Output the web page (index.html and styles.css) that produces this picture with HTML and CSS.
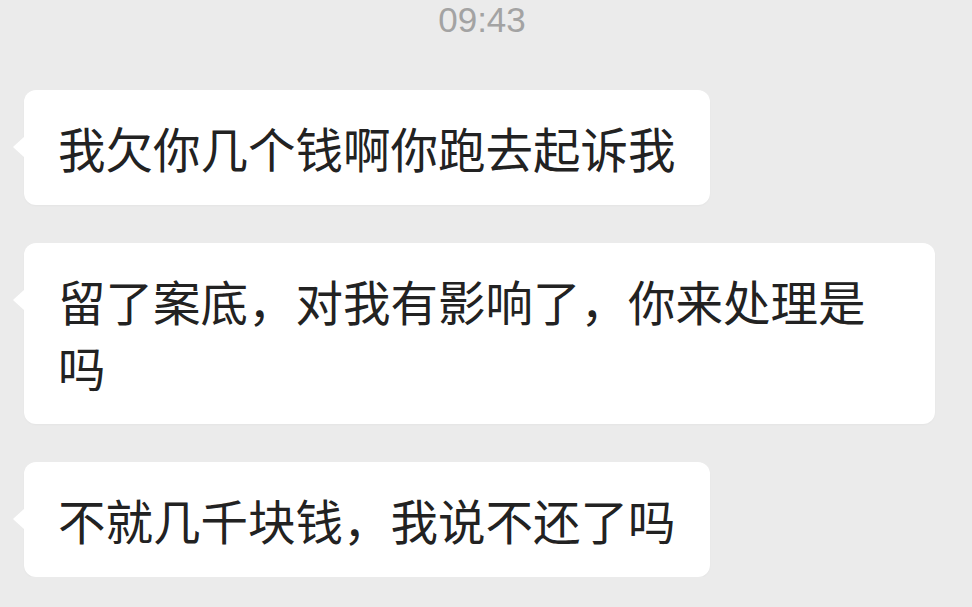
FILE: index.html
```html
<!DOCTYPE html>
<html lang="zh-CN">
<head>
    <meta charset="UTF-8">
    <meta name="viewport" content="width=device-width, initial-scale=1.0">
    <title>聊天</title>
    <link rel="stylesheet" href="styles.css">
</head>
<body>

    <div class="time">09:43</div>

    <div class="chat">
        <div class="bubble">我欠你几个钱啊你跑去起诉我</div>
        <div class="bubble">留了案底，对我有影响了，你来处理是吗</div>
        <div class="bubble">不就几千块钱，我说不还了吗</div>
    </div>

</body>
</html>
```

FILE: styles.css
```css
body {
    margin: 0;
    background-color: #ebebeb;
    font-family: "Noto Sans CJK SC", "Noto Sans", sans-serif;
}
.time {
    text-align: center;
    font-family: "Liberation Sans", Arial, sans-serif;
    font-size: 35px;
    line-height: 32px;
    padding-top: 4px;
    color: #a3a3a3;
    margin-bottom: 54px;
    margin-left: -8px;
}
.chat {
    display: flex;
    flex-direction: column;
    align-items: flex-start;
    gap: 38px;
    padding: 0 24px;
}
.bubble {
    position: relative;
    background: #fff;
    border-radius: 12px;
    padding: 25px 34px 24px;
    max-width: 843px;
    font-size: 47.5px;
    line-height: 66px;
    color: #222;
    box-shadow: 0 1px 2px rgba(0, 0, 0, 0.03);
}
.bubble::before {
    content: "";
    position: absolute;
    left: -11px;
    top: 46px;
    border-top: 11px solid transparent;
    border-bottom: 11px solid transparent;
    border-right: 12px solid #fff;
}
```
